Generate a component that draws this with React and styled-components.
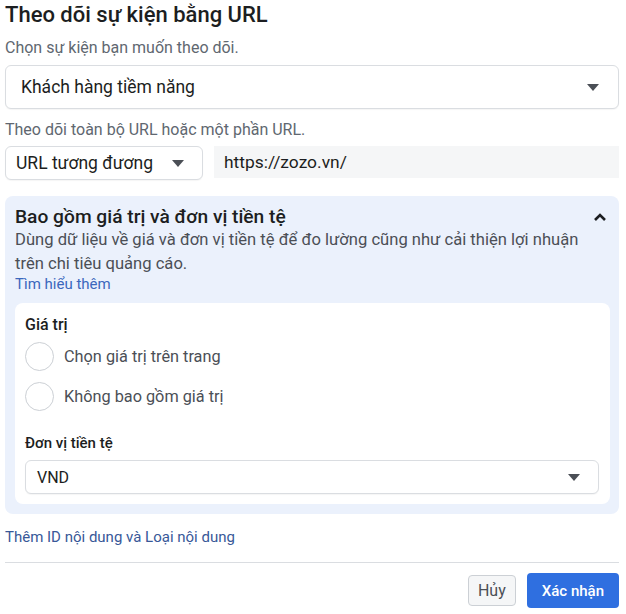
import React from "react";
import styled, { createGlobalStyle } from "styled-components";

const GlobalStyle = createGlobalStyle`
  body {
    margin: 0;
    background: #fff;
    font-family: Roboto, "Liberation Sans", sans-serif;
    color: #1c1e21;
  }
`;

const Page = styled.div`
  width: 626px;
  padding: 0 7px 0 5px;
  box-sizing: border-box;
`;
const Title = styled.h1`
  margin: 0;
  padding-top: 3px;
  font-size: 22px;
  font-weight: 500;
  line-height: 24px;
`;
const Hint = styled.div`
  font-size: 16px;
  color: #606770;
  line-height: 20px;
  margin-top: ${(p) => p.$top || 0}px;
  margin-bottom: ${(p) => p.$bottom || 0}px;
`;
const Select = styled.div`
  display: flex;
  align-items: center;
  justify-content: space-between;
  box-sizing: border-box;
  height: ${(p) => p.$h || 34}px;
  width: ${(p) => (p.$w ? p.$w + "px" : "100%")};
  padding: 0 ${(p) => p.$pr || 18}px 0 ${(p) => p.$pl || 11}px;
  border: 1px solid #dadde1;
  border-radius: 6px;
  background: #fff;
  font-size: ${(p) => p.$fs || 17.5}px;
  box-shadow: 0 1px 1px rgba(0, 0, 0, 0.04);
  flex-shrink: 0;
`;
const Caret = styled.span`
  width: 0;
  height: 0;
  border-left: 6.5px solid transparent;
  border-right: 6.5px solid transparent;
  border-top: 7px solid #4b4f56;
`;
const UrlRow = styled.div`
  display: flex;
  gap: 11px;
  align-items: flex-start;
`;
const UrlInput = styled.div`
  flex: 1;
  height: 32px;
  display: flex;
  align-items: center;
  background: #f5f6f7;
  padding-left: 10px;
  font-size: 17.4px;
  color: #1c1e21;
`;
const Panel = styled.div`
  margin-top: 16px;
  background: #ebf1fc;
  border-radius: 8px;
  padding: 10px 9px 10px 10px;
`;
const PanelHead = styled.div`
  display: flex;
  justify-content: space-between;
  align-items: center;
  padding-right: 3px;
`;
const PanelTitle = styled.div`
  font-size: 19.2px;
  font-weight: 500;
  line-height: 22px;
`;
const PanelText = styled.div`
  font-size: 16.6px;
  line-height: 24px;
  color: #4b4f56;
`;
const Link = styled.a`
  display: block;
  font-size: 15px;
  line-height: ${(p) => p.$lh || 20}px;
  color: ${(p) => p.$color || "#3b67bd"};
  text-decoration: none;
  margin-top: ${(p) => p.$top || 0}px;
`;
const Card = styled.div`
  margin-top: 11px;
  background: #fff;
  border-radius: 8px;
  padding: 11px 11px 10px 10px;
`;
const Label = styled.div`
  font-size: ${(p) => p.$fs || 16}px;
  font-weight: 500;
  line-height: 22px;
  margin-top: ${(p) => p.$top || 0}px;
  margin-bottom: ${(p) => p.$bottom || 0}px;
`;
const Radio = styled.label`
  display: flex;
  align-items: center;
  gap: 10px;
  height: 40px;
  font-size: 16.3px;
  color: #4b4f56;
`;
const Circle = styled.span`
  width: 29px;
  height: 29px;
  border-radius: 50%;
  border: 1px solid #ccd0d5;
  box-sizing: border-box;
`;
const Divider = styled.div`
  height: 1px;
  background: #dadde1;
  margin: 15px 0 10px;
`;
const Footer = styled.div`
  display: flex;
  justify-content: flex-end;
  align-items: center;
  gap: 11px;
`;
const Button = styled.button`
  font-family: inherit;
  font-size: ${(p) => (p.$primary ? 15 : 16)}px;
  font-weight: ${(p) => (p.$primary ? 500 : 400)};
  height: ${(p) => (p.$primary ? 35 : 31)}px;
  padding: 0 ${(p) => (p.$primary ? 15 : 9)}px;
  border-radius: 4px;
  border: ${(p) => (p.$primary ? "none" : "1px solid #ccd0d5")};
  background: ${(p) => (p.$primary ? "#2f6fe0" : "#f5f6f7")};
  color: ${(p) => (p.$primary ? "#fff" : "#4b4f56")};
`;

const ChevronUp = () => (
  <svg width="14" height="10" viewBox="0 0 14 10">
    <path d="M2 8 L7 3 L12 8" fill="none" stroke="#1c1e21" strokeWidth="2.6" />
  </svg>
);

export default function App() {
  return (
    <Page>
      <GlobalStyle />
      <Title>Theo dõi sự kiện bằng URL</Title>
      <Hint $top={11} $bottom={7}>Chọn sự kiện bạn muốn theo dõi.</Hint>
      <Select $h={44} $pl={15} $pr={19}>
        Khách hàng tiềm năng
        <Caret />
      </Select>
      <Hint $top={11} $bottom={6}>Theo dõi toàn bộ URL hoặc một phần URL.</Hint>
      <UrlRow>
        <Select $w={198} $h={34} $pl={10} $pr={18}>
          URL tương đương
          <Caret />
        </Select>
        <UrlInput>https://zozo.vn/</UrlInput>
      </UrlRow>
      <Panel>
        <PanelHead>
          <PanelTitle>Bao gồm giá trị và đơn vị tiền tệ</PanelTitle>
          <ChevronUp />
        </PanelHead>
        <PanelText>
          Dùng dữ liệu về giá và đơn vị tiền tệ để đo lường cũng như cải thiện lợi nhuận trên chi tiêu quảng cáo.
        </PanelText>
        <Link href="#" $lh={16}>Tìm hiểu thêm</Link>
        <Card>
          <Label>Giá trị</Label>
          <Radio>
            <Circle />
            Chọn giá trị trên trang
          </Radio>
          <Radio>
            <Circle />
            Không bao gồm giá trị
          </Radio>
          <Label $fs={15} $top={16} $bottom={6}>Đơn vị tiền tệ</Label>
          <Select $h={34} $pl={11} $pr={18} $fs={16}>
            VND
            <Caret />
          </Select>
        </Card>
      </Panel>
      <Link href="#" $color="#385898" $top={13}>
        Thêm ID nội dung và Loại nội dung
      </Link>
      <Divider />
      <Footer>
        <Button>Hủy</Button>
        <Button $primary>Xác nhận</Button>
      </Footer>
    </Page>
  );
}
